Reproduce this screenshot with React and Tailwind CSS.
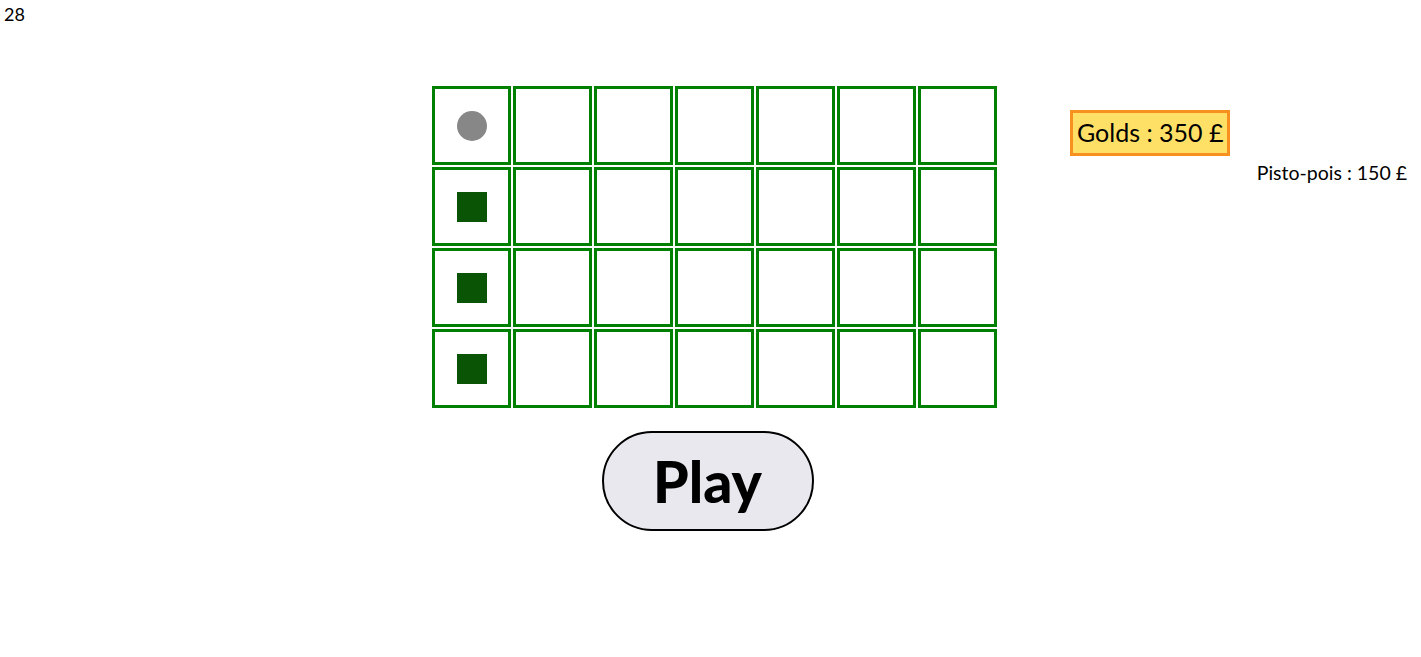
import React from "react";

const ROWS = 4;
const COLS = 7;

function Cell({ row, col }) {
  let content = null;
  if (col === 0 && row === 0) {
    content = <div className="w-[30px] h-[30px] rounded-full bg-[#878787]" />;
  } else if (col === 0) {
    content = <div className="w-[30px] h-[30px] bg-[#0a5505]" />;
  }
  return (
    <div className="w-[79px] h-[79px] border-[3px] border-[#008000] flex items-center justify-center">
      {content}
    </div>
  );
}

export default function App() {
  return (
    <div className="w-[1421px] h-[657px] bg-white text-black font-['Lato',sans-serif]">
      <div className="pl-[4px] pt-[2px] text-[18px] leading-[24px]">28</div>
      <div className="flex mt-[60px]">
        <div className="ml-[432px] flex flex-col items-center">
          <div className="grid grid-cols-7 gap-[2px]">
            {Array.from({ length: ROWS }).map((_, r) =>
              Array.from({ length: COLS }).map((_, c) => (
                <Cell key={`${r}-${c}`} row={r} col={c} />
              ))
            )}
          </div>
          <button className="mt-[23px] w-[212px] h-[100px] rounded-full border-2 border-black bg-[#e8e8ee] text-[57px] font-black leading-none flex items-center justify-center -translate-x-[7px]">
            Play
          </button>
        </div>
        <div className="ml-[73px] mr-[14px] flex-1 flex flex-col pt-[24px]">
          <div className="self-start border-[3px] border-[#f7901e] bg-[#ffe066] px-[4px] h-[46px] flex items-center text-[25px]">
            Golds : 350 £
          </div>
          <div className="self-end mt-[4px] text-[19.5px] leading-[26px]">Pisto-pois : 150 £</div>
        </div>
      </div>
    </div>
  );
}
